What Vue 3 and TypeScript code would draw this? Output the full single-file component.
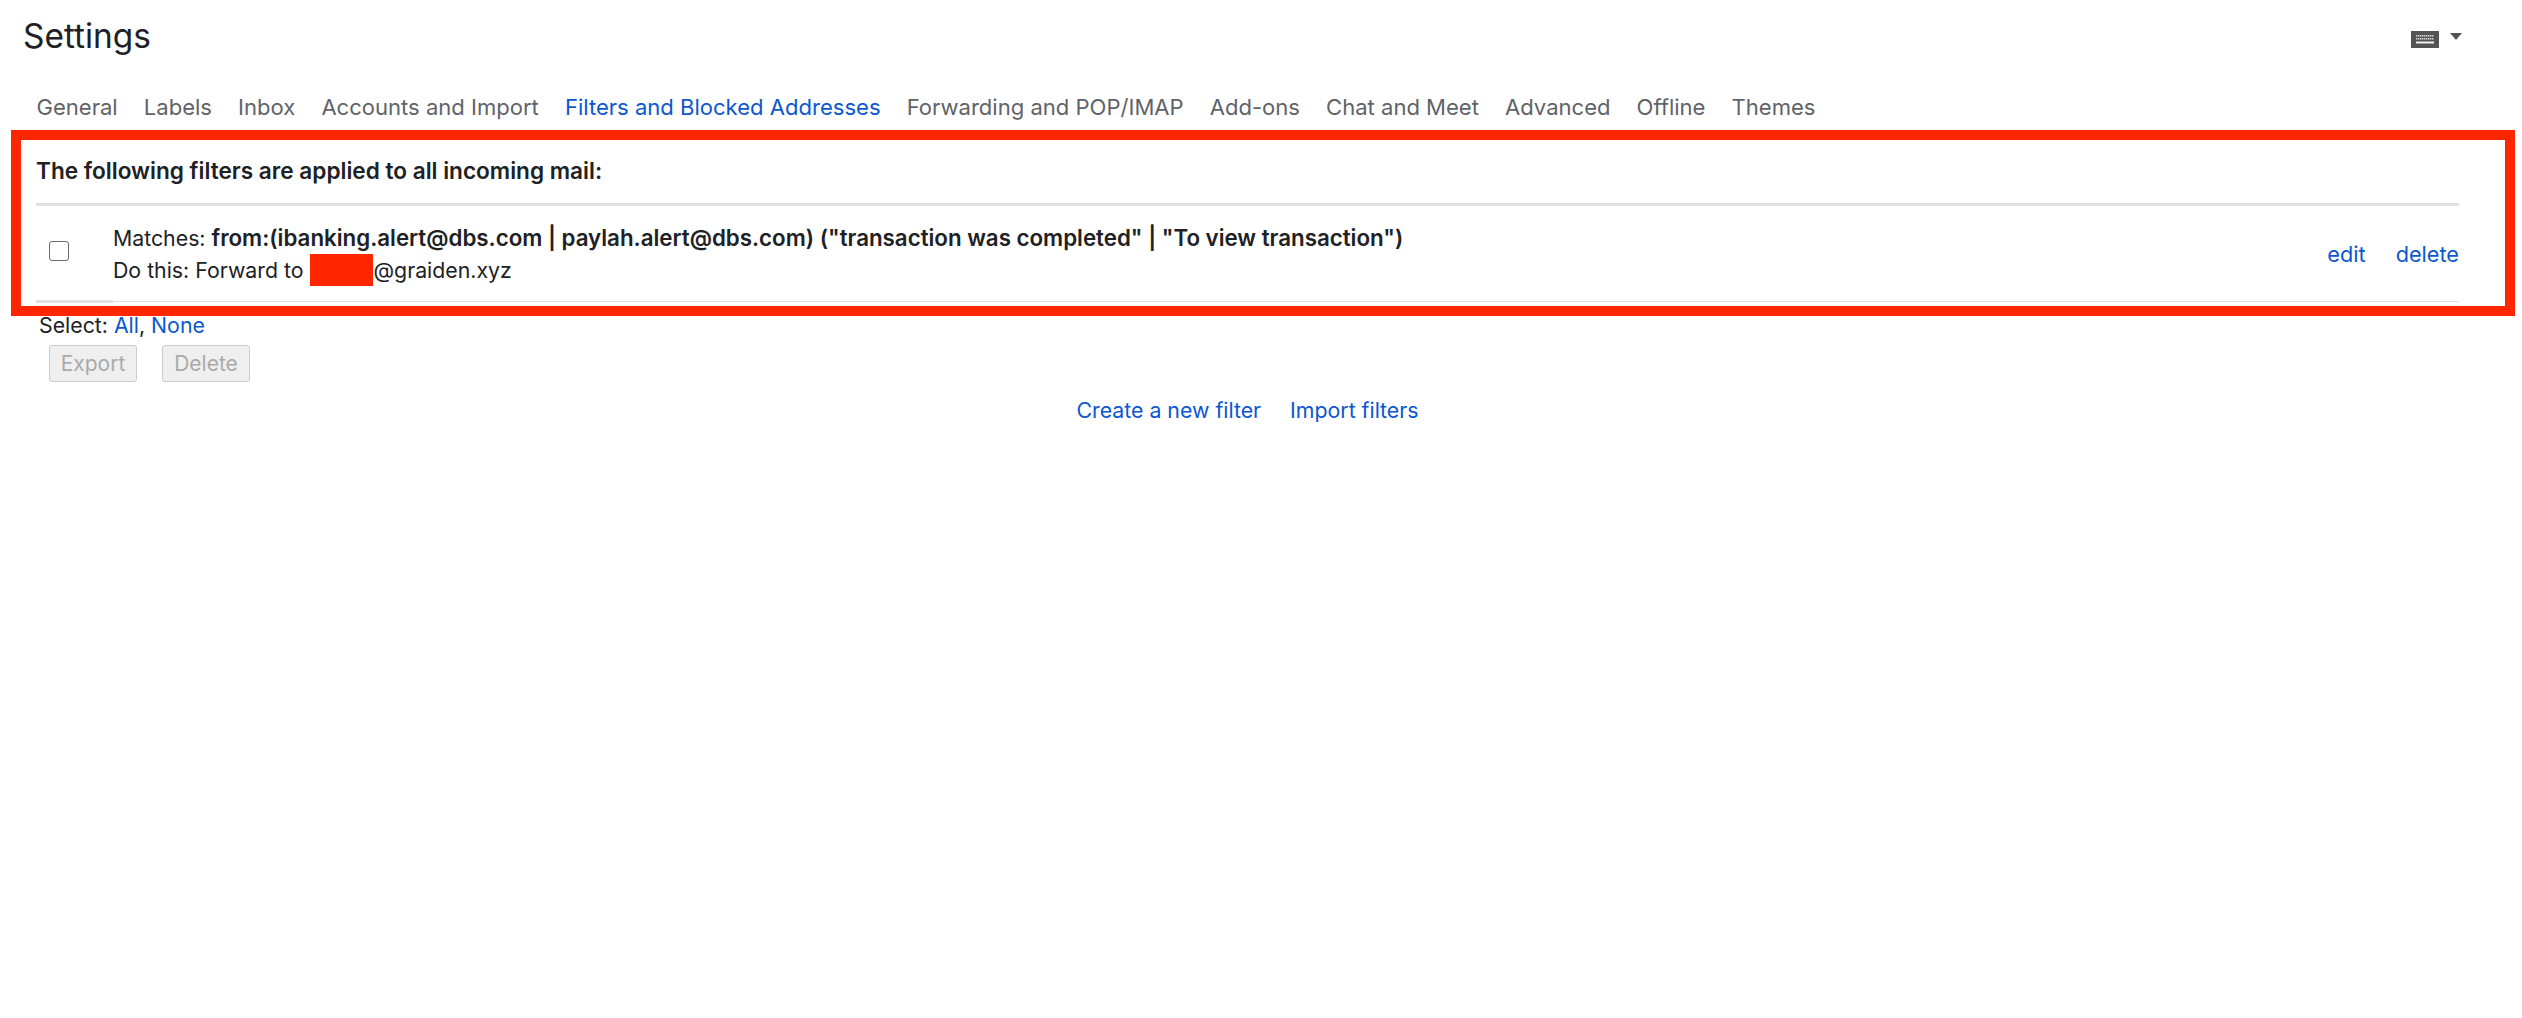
<script setup lang="ts">
const tabs: string[] = ['General','Labels','Inbox','Accounts and Import','Filters and Blocked Addresses','Forwarding and POP/IMAP','Add-ons','Chat and Meet','Advanced','Offline','Themes'];
const active = 'Filters and Blocked Addresses';
const keyX: number[] = [5, 7, 9, 11, 13, 15, 17, 19, 21];
</script>

<template>
  <div class="page">
    <header class="head">
      <h1 class="title">Settings</h1>
      <div class="kbd">
        <svg width="28" height="17" viewBox="0 0 28 17">
          <rect width="28" height="17" fill="#555"/>
          <g fill="#d4d4d4">
            <rect v-for="x in keyX" :key="'a' + x" :x="x" y="4" width="1.4" height="1.6"/>
            <rect v-for="x in keyX" :key="'b' + x" :x="x" y="7" width="1.4" height="1.6"/>
          </g>
          <rect x="5" y="10.5" width="18" height="2" fill="#f0f0f0"/>
        </svg>
        <span class="caret"></span>
      </div>
    </header>
    <nav class="tabs">
      <a v-for="t in tabs" :key="t" class="tab" :class="{ on: t === active }">{{ t }}</a>
    </nav>
    <section class="filters">
      <div class="lead">The following filters are applied to all incoming mail:</div>
      <div class="row">
        <span class="check"></span>
        <div class="desc">
          <div>Matches: <b>from:(ibanking.alert@dbs.com | paylah.alert@dbs.com) ("transaction was completed" | "To view transaction")</b></div>
          <div class="second">Do this: Forward to <span class="redact"></span>@graiden.xyz</div>
        </div>
        <div class="actions"><a>edit</a><a>delete</a></div>
      </div>
      <div class="stub"></div>
    </section>
    <div class="select">Select: <a>All</a>, <a>None</a></div>
    <div class="btns"><button disabled>Export</button><button disabled>Delete</button></div>
    <div class="links"><a>Create a new filter</a><a>Import filters</a></div>
    <div class="annot"></div>
  </div>
</template>

<style scoped>
.page { position: relative; width: 2522px; height: 1018px; background: #fff; font-family: Inter, Roboto, sans-serif; font-size: 21.3px; color: #202124; overflow: hidden; box-sizing: border-box; }
.head { display: flex; justify-content: space-between; align-items: flex-start; height: 77px; padding: 16px 60px 0 23px; box-sizing: border-box; }
.title { margin: 0; font-size: 33.4px; font-weight: 400; line-height: 40px; }
.kbd { display: flex; align-items: flex-start; gap: 11px; padding-top: 15px; }
.caret { width: 0; height: 0; margin-top: 2px; border-left: 6.5px solid transparent; border-right: 6.5px solid transparent; border-top: 7px solid #555; }
.tabs { display: flex; gap: 26.1px; padding-left: 36.5px; height: 59px; align-items: flex-start; padding-top: 16px; box-sizing: border-box; line-height: 28px; }
.tab { color: #5f6368; font-size: 22.05px; }
.tab.on { color: #0b57d0; }
.filters { margin: 0 63px 0 36px; padding-top: 20px; }
.lead { font-weight: 600; height: 47px; line-height: 30px; font-size: 22.6px; border-bottom: 3px solid #e0e0e0; }
b { font-weight: 600; font-size: 22.3px; }
.row { display: flex; align-items: center; height: 96px; border-bottom: 1px solid #e0e0e0; box-sizing: border-box; }
.check { width: 20px; height: 20px; margin: 0 44px 6px 13px; border: 1.5px solid #6b6b6b; border-radius: 3px; box-sizing: border-box; }
.desc { flex: 1; line-height: 32px; margin-top: 1px; }
.second { display: flex; align-items: center; height: 32px; white-space: pre; }
.redact { display: inline-block; width: 63px; height: 32px; margin: 0 1px 0 0; background: #ff2600; }
.actions { display: flex; gap: 30px; font-size: 21.7px; }
a { color: #0b57d0; }
.stub { width: 77px; height: 3px; margin-top: -2px; background: #e0e0e0; }
.select { margin: 8px 0 0 39px; line-height: 28px; height: 28px; }
.btns { display: flex; gap: 25px; margin: 6px 0 0 49px; }
button { width: 88px; height: 37px; padding: 0; border: 1px solid #ccc; border-radius: 3px; background: #efefef; color: #aaa; font: inherit; font-size: 21px; }
.links { display: flex; justify-content: center; gap: 29px; margin-top: 14px; line-height: 28px; padding-right: 27px; }
.annot { position: absolute; left: 11px; top: 130px; width: 2504px; height: 186px; border: 10px solid #ff2600; box-sizing: border-box; pointer-events: none; }
</style>
